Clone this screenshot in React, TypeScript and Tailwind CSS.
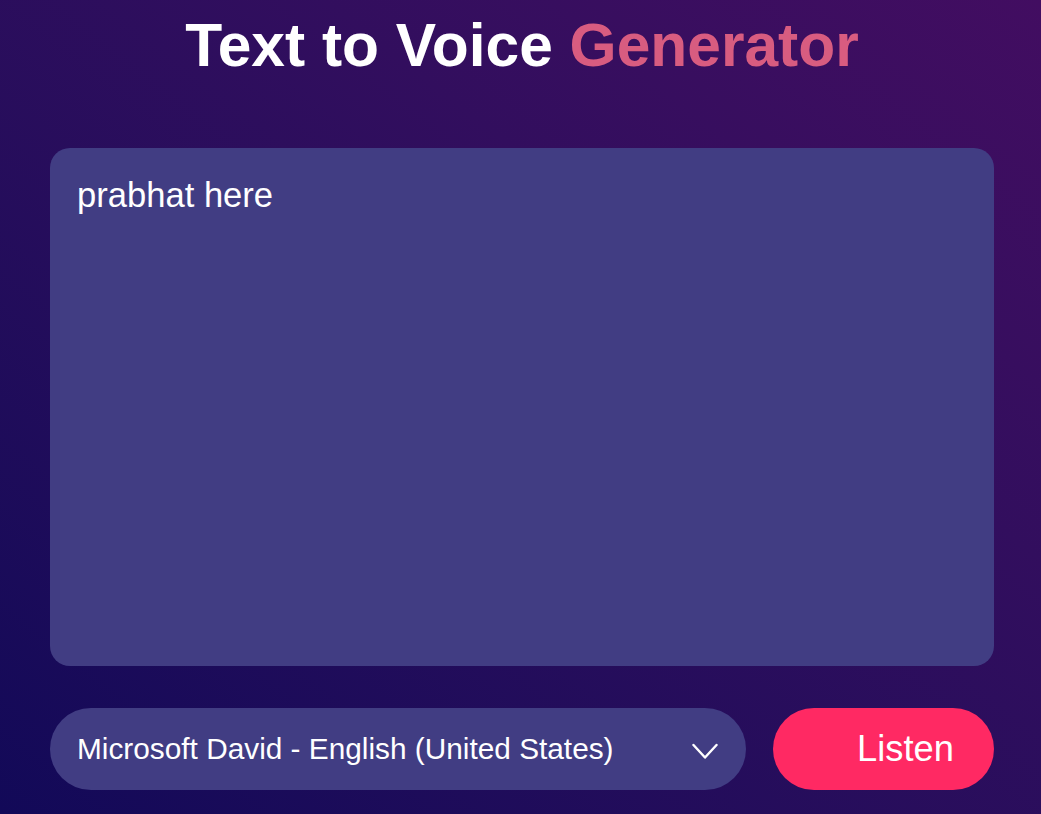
import React, { useState } from 'react';

const voices = ['Microsoft David - English (United States)', 'Microsoft Zira - English (United States)'];

function Chevron() {
  return (
    <svg width="26" height="17" viewBox="0 0 26 17" fill="none" className="pointer-events-none">
      <polyline points="1.5,2 13,14.5 24.5,2" stroke="white" strokeWidth="2.4" strokeLinecap="round" strokeLinejoin="round" />
    </svg>
  );
}

export default function App() {
  const [text, setText] = useState('prabhat here');
  const [voice, setVoice] = useState(voices[0]);

  return (
    <div className="min-h-[814px] w-full bg-linear-to-tr from-[#120958] to-[#420d61] font-['Liberation_Sans',Arial,sans-serif] text-white">
      <div className="ml-[50px] w-[944px] pt-[11px]">
        <h1 className="text-center text-[60.5px] font-bold leading-[69px]">
          Text to Voice <span className="text-[#d85c80]">Generator</span>
        </h1>

        <textarea
          value={text}
          onChange={(e) => setText(e.target.value)}
          className="mt-[68px] block h-[518px] w-full resize-none rounded-[20px] bg-[#413d83] pl-[27px] pr-[25px] pt-[28px] text-[34.6px] leading-[1.15] text-white outline-none"
        />

        <div className="mt-[42px] flex gap-[27px]">
          <div className="relative flex h-[82px] flex-1 items-center rounded-full bg-[#413d83]">
            <select
              value={voice}
              onChange={(e) => setVoice(e.target.value)}
              className="h-full w-full appearance-none rounded-full bg-transparent pl-[27px] pr-[60px] text-[29.8px] text-white outline-none"
            >
              {voices.map((v) => (
                <option key={v} className="bg-[#413d83]">{v}</option>
              ))}
            </select>
            <div className="absolute right-[28px] top-[35px]">
              <Chevron />
            </div>
          </div>
          <button className="flex h-[82px] w-[221px] items-center rounded-full bg-[#ff2963] pl-[84px] text-[36.3px] text-white">
            Listen
          </button>
        </div>
      </div>
    </div>
  );
}
